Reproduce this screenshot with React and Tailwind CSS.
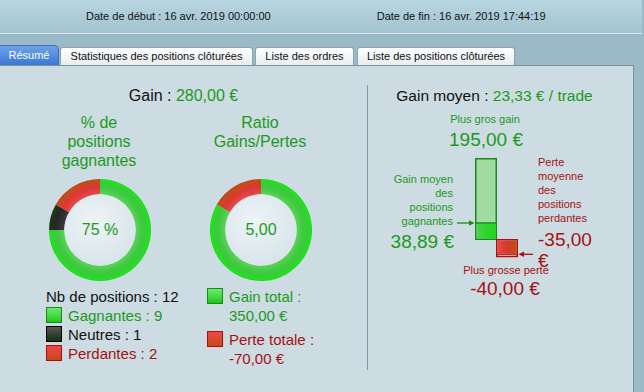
import React from "react";

// annulus sector, angles in degrees clockwise from 12 o'clock
function arcPath(cx, cy, ro, ri, a0, a1) {
  const rad = (a) => ((a - 90) * Math.PI) / 180;
  const pt = (r, a) => [cx + r * Math.cos(rad(a)), cy + r * Math.sin(rad(a))];
  const large = a1 - a0 > 180 ? 1 : 0;
  const [x0, y0] = pt(ro, a0);
  const [x1, y1] = pt(ro, a1);
  const [x2, y2] = pt(ri, a1);
  const [x3, y3] = pt(ri, a0);
  return `M${x0} ${y0} A${ro} ${ro} 0 ${large} 1 ${x1} ${y1} L${x2} ${y2} A${ri} ${ri} 0 ${large} 0 ${x3} ${y3} Z`;
}

function Donut({ id, segments, label }) {
  return (
    <div className="relative ml-[3px] h-[102px] w-[102px]">
      <svg width="102" height="102" viewBox="0 0 102 102" className="absolute inset-0">
        <defs>
          <radialGradient id={`${id}-green`} cx="51" cy="51" r="51" gradientUnits="userSpaceOnUse">
            <stop offset="0.7" stopColor="#5bd45b" />
            <stop offset="0.82" stopColor="#41c941" />
            <stop offset="0.92" stopColor="#33cf33" />
            <stop offset="0.97" stopColor="#1ee41e" />
            <stop offset="1" stopColor="#27d027" />
          </radialGradient>
          <radialGradient id={`${id}-red`} cx="51" cy="51" r="51" gradientUnits="userSpaceOnUse">
            <stop offset="0.7" stopColor="#e94a4a" />
            <stop offset="0.84" stopColor="#dc3636" />
            <stop offset="0.95" stopColor="#c84a1c" />
            <stop offset="1" stopColor="#b84812" />
          </radialGradient>
          <radialGradient id={`${id}-black`} cx="51" cy="51" r="51" gradientUnits="userSpaceOnUse">
            <stop offset="0.7" stopColor="#3a3a3a" />
            <stop offset="0.88" stopColor="#262626" />
            <stop offset="1" stopColor="#1b3a12" />
          </radialGradient>
          <radialGradient id={`${id}-center`} cx="45" cy="42" r="44" gradientUnits="userSpaceOnUse">
            <stop offset="0" stopColor="#eef4f7" />
            <stop offset="1" stopColor="#d9e5eb" />
          </radialGradient>
        </defs>
        {segments.map((s) => (
          <path key={s.c + s.a0} d={arcPath(51, 51, 51, 35.7, s.a0, s.a1)} fill={`url(#${id}-${s.c})`} />
        ))}
        <circle cx="51" cy="51" r="35.7" fill={`url(#${id}-center)`} />
      </svg>
      <div className="absolute inset-0 flex items-center justify-center text-[16px] text-[#1c9a1c]">{label}</div>
    </div>
  );
}

function Swatch({ color }) {
  const styles = {
    green: "border-[#1a8a1a] from-[#6aec6a] to-[#12c812]",
    black: "border-[#000] from-[#555] to-[#12300f]",
    red: "border-[#a81010] from-[#ef4848] to-[#c84812]",
  };
  return <span className={`mt-px h-[16px] w-[16px] shrink-0 border bg-linear-to-b ${styles[color]}`} />;
}

function Tab({ children, active, className }) {
  if (active) {
    return (
      <div className={`flex h-[20px] items-center justify-center rounded-tr-[5px] border border-l-0 border-b-0 border-[#3d6fb8] bg-linear-to-b from-[#6ea3e8] to-[#3c78d2] text-white ${className}`}>
        {children}
      </div>
    );
  }
  return (
    <div className={`flex h-[18px] items-center justify-center rounded-t-[3px] border border-b-0 border-[#8ea3ad] bg-linear-to-b from-white to-[#e8edf0] text-[#111] ${className}`}>
      {children}
    </div>
  );
}

export default function App() {
  return (
    <div className="h-[392px] w-[644px] overflow-hidden bg-[#9bbac7] font-['Liberation_Sans',Arial,sans-serif]">
      <div className="flex h-[33px] w-[642px] items-center bg-linear-to-b from-[#b7d6e2] to-[#a2c2ce] text-[11px] text-[#111]">
        <span className="ml-[86px]">Date de début : 16 avr. 2019 00:00:00</span>
        <span className="ml-[106px]">Date de fin : 16 avr. 2019 17:44:19</span>
      </div>
      <div className="h-px w-[642px] bg-[#dbe8ee]" />

      <div className="mt-[11px] flex h-[20px] items-end text-[11px]">
        <Tab active className="w-[59px]">Résumé</Tab>
        <Tab className="ml-px w-[193px]">Statistiques des positions clôturées</Tab>
        <Tab className="ml-[2px] w-[99px]">Liste des ordres</Tab>
        <Tab className="ml-[3px] w-[158px]">Liste des positions clôturées</Tab>
      </div>

      <div className="flex h-[327px] w-[634px] border-t border-r border-[#7a929e] bg-[#cddbe2]">
        {/* left half */}
        <div className="flex w-[367px] flex-col items-center pt-[20px]">
          <div className="text-[16px] leading-[19px] text-[#111]">
            Gain : <span className="text-[#1c9a1c]">280,00 €</span>
          </div>
          <div className="mt-[8px] flex self-start pl-[46px]">
            <div className="flex w-[161px] flex-col items-start">
              <div className="h-[66px] w-[106px] text-center text-[16px] leading-[19px] text-[#1c9a1c]">
                % de
                <br />
                positions
                <br />
                gagnantes
              </div>
              <Donut
                id="pct"
                label="75 %"
                segments={[
                  { c: "green", a0: 0, a1: 270 },
                  { c: "black", a0: 270, a1: 300 },
                  { c: "red", a0: 300, a1: 360 },
                ]}
              />
              <div className="mt-[6px] text-[15px] leading-[19px]">
                <div className="text-[#111]">Nb de positions : 12</div>
                <div className="flex items-start gap-[6px]">
                  <Swatch color="green" />
                  <span className="text-[#1c9a1c]">Gagnantes : 9</span>
                </div>
                <div className="flex items-start gap-[6px]">
                  <Swatch color="black" />
                  <span className="text-[#111]">Neutres : 1</span>
                </div>
                <div className="flex items-start gap-[6px]">
                  <Swatch color="red" />
                  <span className="text-[#a51212]">Perdantes : 2</span>
                </div>
              </div>
            </div>

            <div className="flex w-[150px] flex-col items-start">
              <div className="h-[66px] w-[106px] text-center text-[16px] leading-[19px] text-[#1c9a1c]">
                Ratio
                <br />
                Gains/Pertes
              </div>
              <Donut
                id="ratio"
                label="5,00"
                segments={[
                  { c: "green", a0: 0, a1: 300 },
                  { c: "red", a0: 300, a1: 360 },
                ]}
              />
              <div className="mt-[6px] flex flex-col gap-[5px] text-[15px] leading-[19px]">
                <div className="flex items-start gap-[6px]">
                  <Swatch color="green" />
                  <span className="text-[#1c9a1c]">
                    Gain total :
                    <br />
                    350,00 €
                  </span>
                </div>
                <div className="flex items-start gap-[6px]">
                  <Swatch color="red" />
                  <span className="text-[#a51212]">
                    Perte totale :
                    <br />
                    -70,00 €
                  </span>
                </div>
              </div>
            </div>
          </div>
        </div>

        <div className="mt-[19px] h-[285px] w-px bg-[#8399a5]" />

        {/* right half */}
        <div className="flex flex-1 flex-col pt-[20px]">
          <div className="pr-[12px] text-center text-[15.5px] leading-[19px] text-[#111]">
            Gain moyen : <span className="text-[#1c9a1c]">23,33 € / trade</span>
          </div>
          <div className="relative h-[200px] w-full">
            <svg width="265" height="200" className="absolute inset-0">
              <defs>
                <linearGradient id="barGreen" x1="0" y1="0" x2="1" y2="0">
                  <stop offset="0" stopColor="#4fd24f" />
                  <stop offset="0.5" stopColor="#2fd42f" />
                  <stop offset="1" stopColor="#14de14" />
                </linearGradient>
                <linearGradient id="barRed" x1="0" y1="0" x2="1" y2="0">
                  <stop offset="0" stopColor="#ec4a4a" />
                  <stop offset="0.5" stopColor="#d43a2a" />
                  <stop offset="1" stopColor="#c24a12" />
                </linearGradient>
              </defs>
              <rect x="107.75" y="53.75" width="20.5" height="80.5" fill="#a1dba1" stroke="#1a8a1a" strokeWidth="1.5" />
              <rect x="108.5" y="118.5" width="19" height="15" fill="url(#barGreen)" />
              <line x1="107.75" y1="118" x2="128.25" y2="118" stroke="#1a8a1a" strokeWidth="1.5" />
              <rect x="128.75" y="134.75" width="20.5" height="16.75" fill="#e8c8c8" stroke="#aa1010" strokeWidth="1.5" />
              <rect x="129.5" y="135.5" width="19" height="13.3" fill="url(#barRed)" />
              <line x1="128.75" y1="149.3" x2="149.25" y2="149.3" stroke="#aa1010" strokeWidth="1" />
              <line x1="89" y1="118" x2="102" y2="118" stroke="#1a8a1a" strokeWidth="1.3" />
              <polygon points="101,115.3 106.5,118 101,120.7" fill="#1a8a1a" />
              <line x1="165" y1="149.3" x2="155" y2="149.3" stroke="#aa1010" strokeWidth="1.3" />
              <polygon points="156,146.6 150.5,149.3 156,152" fill="#aa1010" />
            </svg>

            <div className="absolute left-[67px] top-[7px] w-[100px] text-center text-[11px] leading-[14px] text-[#1c9a1c]">Plus gros gain</div>
            <div className="absolute left-[68px] top-[24px] w-[100px] text-center text-[19px] leading-[22px] text-[#1c9a1c]">195,00 €</div>

            <div className="absolute left-0 top-[67px] w-[85px] text-right text-[11px] leading-[14.1px] text-[#1c9a1c]">
              Gain moyen
              <br />
              des
              <br />
              positions
              <br />
              gagnantes
            </div>
            <div className="absolute left-0 top-[126px] w-[86px] text-right text-[19px] leading-[22px] text-[#1c9a1c]">38,89 €</div>

            <div className="absolute left-[170px] top-[50px] text-[11px] leading-[14.1px] text-[#a51212]">
              Perte
              <br />
              moyenne
              <br />
              des
              <br />
              positions
              <br />
              perdantes
            </div>
            <div className="absolute left-[170px] top-[123.5px] w-[62px] text-[19px] leading-[21.5px] text-[#a51212]">-35,00 €</div>

            <div className="absolute left-[78px] top-[158px] w-[120px] text-center text-[11px] leading-[14px] text-[#a51212]">Plus grosse perte</div>
            <div className="absolute left-[77px] top-[173px] w-[120px] text-center text-[19px] leading-[22px] text-[#a51212]">-40,00 €</div>
          </div>
        </div>
      </div>
    </div>
  );
}
